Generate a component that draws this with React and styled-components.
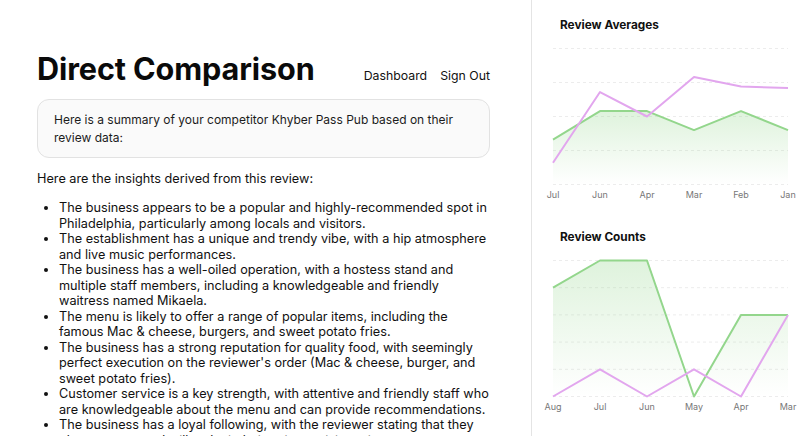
import React from "react";
import styled, { createGlobalStyle } from "styled-components";

const GlobalStyle = createGlobalStyle`
  html, body {
    margin: 0;
    padding: 0;
    background: #ffffff;
    font-family: Inter, "Noto Sans", sans-serif;
    color: #111111;
    overflow: hidden;
  }
`;

const Page = styled.div`
  display: flex;
  width: 806px;
  height: 436px;
  overflow: hidden;
`;

const Main = styled.main`
  width: 531px;
  flex-shrink: 0;
  box-sizing: border-box;
  padding: 49px 41px 0 37px;
`;

const Header = styled.header`
  display: flex;
  justify-content: space-between;
  align-items: baseline;
`;

const Title = styled.h1`
  margin: 0;
  font-size: 30.6px;
  line-height: 39px;
  font-weight: 700;
  letter-spacing: -0.1px;
  color: #0a0a0a;
`;

const Nav = styled.nav`
  display: flex;
  gap: 13px;
`;

const NavLink = styled.a`
  font-size: 12.3px;
  color: #111111;
  text-decoration: none;
  cursor: pointer;
`;

const SummaryBox = styled.div`
  margin-top: 11px;
  padding: 11px 16px 10px;
  border: 1px solid #e2e2e2;
  border-radius: 12px;
  background: #fafafa;
  font-size: 12px;
  line-height: 18px;
  color: #1c1c1c;
`;

const Intro = styled.p`
  margin: 12px 0 0;
  font-size: 12.7px;
  line-height: 18px;
  color: #111111;
`;

const Insights = styled.ul`
  margin: 12px 0 0;
  padding-left: 22px;
  font-size: 12.7px;
  line-height: 15.5px;
  color: #111111;
`;

const Sidebar = styled.aside`
  flex: 1;
  border-left: 1px solid #e4e4e4;
  padding-top: 16px;
  display: flex;
  flex-direction: column;
`;

const ChartSection = styled.section`
  display: flex;
  flex-direction: column;
`;

const ChartTitle = styled.h2`
  margin: 0;
  padding-left: 28px;
  font-size: 11.8px;
  line-height: 18px;
  font-weight: 700;
  color: #111111;
`;

const ChartSvg = styled.svg`
  display: block;
  height: ${({ $h }) => $h}px;
  width: 274px;
`;

const GREEN = "#93d68c";
const PINK = "#e2a6ee";

const X0 = 21;
const X1 = 256;
const TOP = 14.5;
const BOTTOM = 150.5;

function LineChart({ id, labels, series, max, gridLines, height }) {
  const step = (X1 - X0) / (labels.length - 1);
  const xy = (v, i) => [X0 + i * step, BOTTOM - (v / max) * (BOTTOM - TOP)];
  const toPath = (vals) =>
    vals.map((v, i) => `${i ? "L" : "M"}${xy(v, i).join(",")}`).join(" ");
  const grids = Array.from({ length: gridLines }, (_, i) =>
    TOP + (i * (BOTTOM - TOP)) / (gridLines - 1)
  );

  return (
    <ChartSvg $h={height} viewBox={`0 0 274 ${height}`}>
      <defs>
        <linearGradient id={id} x1="0" y1="0" x2="0" y2="1">
          <stop offset="0%" stopColor={GREEN} stopOpacity="0.3" />
          <stop offset="100%" stopColor={GREEN} stopOpacity="0" />
        </linearGradient>
      </defs>
      {grids.map((y) => (
        <line
          key={y}
          x1={X0}
          x2={X1}
          y1={y}
          y2={y}
          stroke="#ececec"
          strokeDasharray="3 3"
        />
      ))}
      {series.map((s) =>
        s.fill ? (
          <path
            key={s.name + "area"}
            d={`${toPath(s.values)} L${X1},${BOTTOM} L${X0},${BOTTOM} Z`}
            fill={`url(#${id})`}
          />
        ) : null
      )}
      {series.map((s) => (
        <path
          key={s.name}
          d={toPath(s.values)}
          fill="none"
          stroke={s.color}
          strokeWidth="2"
          strokeLinejoin="round"
        />
      ))}
      {labels.map((l, i) => (
        <text
          key={l}
          x={X0 + i * step}
          y={BOTTOM + 13}
          textAnchor="middle"
          fontSize="9"
          fill="#777777"
          fontFamily="Inter, sans-serif"
        >
          {l}
        </text>
      ))}
    </ChartSvg>
  );
}

const insights = [
  "The business appears to be a popular and highly-recommended spot in Philadelphia, particularly among locals and visitors.",
  "The establishment has a unique and trendy vibe, with a hip atmosphere and live music performances.",
  "The business has a well-oiled operation, with a hostess stand and multiple staff members, including a knowledgeable and friendly waitress named Mikaela.",
  "The menu is likely to offer a range of popular items, including the famous Mac & cheese, burgers, and sweet potato fries.",
  "The business has a strong reputation for quality food, with seemingly perfect execution on the reviewer's order (Mac & cheese, burger, and sweet potato fries).",
  "Customer service is a key strength, with attentive and friendly staff who are knowledgeable about the menu and can provide recommendations.",
  "The business has a loyal following, with the reviewer stating that they plan to return and will make it their point to visit again.",
];

const averages = [
  { name: "you", color: GREEN, fill: true, values: [33, 54, 54, 40, 54, 40] },
  { name: "them", color: PINK, values: [16, 68, 50, 79, 72, 71] },
];

const counts = [
  { name: "you", color: GREEN, fill: true, values: [4, 5, 5, 0, 3, 3] },
  { name: "them", color: PINK, values: [0, 1, 0, 1, 0, 3] },
];

export default function App() {
  return (
    <Page>
      <GlobalStyle />
      <Main>
        <Header>
          <Title>Direct Comparison</Title>
          <Nav>
            <NavLink>Dashboard</NavLink>
            <NavLink>Sign Out</NavLink>
          </Nav>
        </Header>
        <SummaryBox>
          Here is a summary of your competitor Khyber Pass Pub based on their
          review data:
        </SummaryBox>
        <Intro>Here are the insights derived from this review:</Intro>
        <Insights>
          {insights.map((t) => (
            <li key={t}>{t}</li>
          ))}
        </Insights>
      </Main>
      <Sidebar>
        <ChartSection>
          <ChartTitle>Review Averages</ChartTitle>
          <LineChart
            id="avgFill"
            labels={["Jul", "Jun", "Apr", "Mar", "Feb", "Jan"]}
            series={averages}
            max={100}
            gridLines={5}
            height={194}
          />
        </ChartSection>
        <ChartSection>
          <ChartTitle>Review Counts</ChartTitle>
          <LineChart
            id="countFill"
            labels={["Aug", "Jul", "Jun", "May", "Apr", "Mar"]}
            series={counts}
            max={5}
            gridLines={6}
            height={190}
          />
        </ChartSection>
      </Sidebar>
    </Page>
  );
}
